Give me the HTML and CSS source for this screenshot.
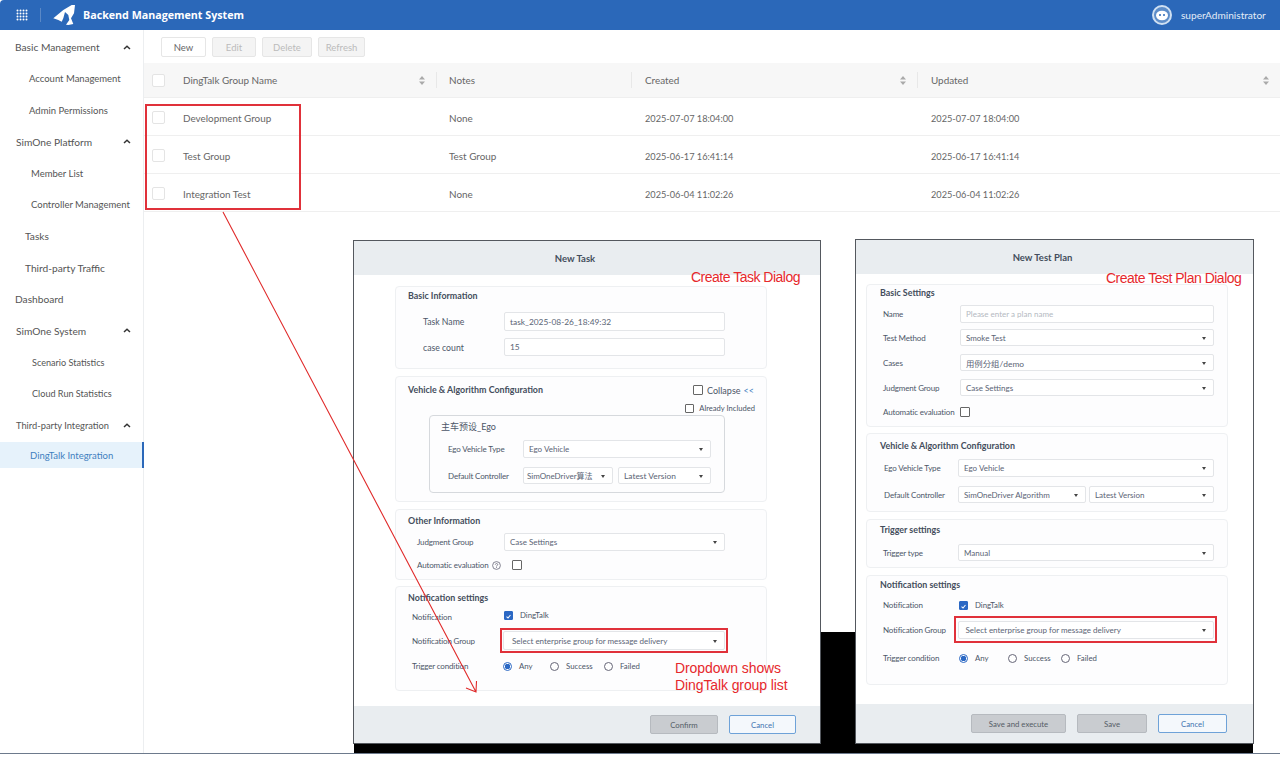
FILE: index.html
```html
<!DOCTYPE html>
<html lang="en">
<head>
<meta charset="utf-8">
<title>Backend Management System</title>
<link rel="stylesheet" href="styles.css">
</head>
<body>
<div class="app">
  <header class="topbar">
    <svg class="apps" width="12" height="12" viewBox="0 0 12 12" fill="#fff"><circle cx="1.5" cy="1.5" r="1"/><circle cx="4.5" cy="1.5" r="1"/><circle cx="7.5" cy="1.5" r="1"/><circle cx="10.5" cy="1.5" r="1"/><circle cx="1.5" cy="4.5" r="1"/><circle cx="4.5" cy="4.5" r="1"/><circle cx="7.5" cy="4.5" r="1"/><circle cx="10.5" cy="4.5" r="1"/><circle cx="1.5" cy="7.5" r="1"/><circle cx="4.5" cy="7.5" r="1"/><circle cx="7.5" cy="7.5" r="1"/><circle cx="10.5" cy="7.5" r="1"/><circle cx="1.5" cy="10.5" r="1"/><circle cx="4.5" cy="10.5" r="1"/><circle cx="7.5" cy="10.5" r="1"/><circle cx="10.5" cy="10.5" r="1"/></svg>
    <span class="topbar-sep"></span>
    <svg class="logo" width="22" height="20" viewBox="0 0 22 20" fill="#fff"><path d="M.3 13.300 10.300 5 18.700 0H22L21 8.300 18 13.300 20.300 19 15.300 20 13 19.700 16.300 15 15.300 10 12 7 10.300 13.300 8.700 16.700 5.300 15Z"/></svg>
    <span class="brand">Backend Management System</span>
    <span class="spacer"></span>
    <svg class="avatar" width="20" height="20" viewBox="0 0 20 20"><circle cx="10" cy="10" r="9" fill="#5d8dc9" stroke="#cfe0f2" stroke-width="2"/><ellipse cx="10" cy="10.500" rx="6" ry="4.800" fill="#fff"/><circle cx="8" cy="10" r="1" fill="#2b68b9"/><circle cx="12" cy="10" r="1" fill="#2b68b9"/></svg>
    <span class="username">superAdministrator</span>
  </header>
  <div class="workspace">
    <nav class="sidebar">
      <div class="nav-item i15">Basic Management<svg class="chev" width="8" height="5" viewBox="0 0 8 5"><path d="M1 4 4 1.200 7 4" fill="none" stroke="#333" stroke-width="1.500"/></svg></div>
      <div class="nav-item i29">Account Management</div>
      <div class="nav-item i29">Admin Permissions</div>
      <div class="nav-item i16">SimOne Platform<svg class="chev" width="8" height="5" viewBox="0 0 8 5"><path d="M1 4 4 1.200 7 4" fill="none" stroke="#333" stroke-width="1.500"/></svg></div>
      <div class="nav-item i31">Member List</div>
      <div class="nav-item i31">Controller Management</div>
      <div class="nav-item i25">Tasks</div>
      <div class="nav-item i25">Third-party Traffic</div>
      <div class="nav-item i15">Dashboard</div>
      <div class="nav-item i16">SimOne System<svg class="chev" width="8" height="5" viewBox="0 0 8 5"><path d="M1 4 4 1.200 7 4" fill="none" stroke="#333" stroke-width="1.500"/></svg></div>
      <div class="nav-item i32">Scenario Statistics</div>
      <div class="nav-item i32">Cloud Run Statistics</div>
      <div class="nav-item i16 slim">Third-party Integration<svg class="chev" width="8" height="5" viewBox="0 0 8 5"><path d="M1 4 4 1.200 7 4" fill="none" stroke="#333" stroke-width="1.500"/></svg></div>
      <div class="nav-item i30 active">DingTalk Integration</div>
    </nav>
    <main class="main">
      <div class="toolbar">
        <button class="tool w45">New</button>
        <button class="tool off w44">Edit</button>
        <button class="tool off w50">Delete</button>
        <button class="tool off w47">Refresh</button>
      </div>
      <div class="table">
        <div class="tr th">
          <div class="td"><span class="tick"></span><span class="name">DingTalk Group Name</span><svg class="sort" width="6" height="9" viewBox="0 0 6 9" fill="#aaa"><path d="M3 0 6 3.400H0ZM3 9 0 5.600H6Z"/></svg></div>
          <div class="td sep">Notes</div>
          <div class="td sep">Created<svg class="sort" width="6" height="9" viewBox="0 0 6 9" fill="#aaa"><path d="M3 0 6 3.400H0ZM3 9 0 5.600H6Z"/></svg></div>
          <div class="td sep">Updated<svg class="sort" width="6" height="9" viewBox="0 0 6 9" fill="#aaa"><path d="M3 0 6 3.400H0ZM3 9 0 5.600H6Z"/></svg></div>
        </div>
        <div class="tr">
          <div class="td"><span class="tick"></span><span class="name">Development Group</span></div>
          <div class="td">None</div><div class="td date">2025-07-07 18:04:00</div><div class="td date">2025-07-07 18:04:00</div>
        </div>
        <div class="tr">
          <div class="td"><span class="tick"></span><span class="name">Test Group</span></div>
          <div class="td">Test Group</div><div class="td date">2025-06-17 16:41:14</div><div class="td date">2025-06-17 16:41:14</div>
        </div>
        <div class="tr">
          <div class="td"><span class="tick"></span><span class="name">Integration Test</span></div>
          <div class="td">None</div><div class="td date">2025-06-04 11:02:26</div><div class="td date">2025-06-04 11:02:26</div>
        </div>
      </div>
    </main>
  </div>

  <div class="backdrop"></div>

  <section class="dialog task">
    <div class="d-head">New Task</div>
    <div class="d-body">
      <div class="panel p1">
        <div class="p-title">Basic Information</div>
        <div class="row r1"><label class="lab large w96 in15">Task Name</label><div class="field wide w221 h19">task_2025-08-26_18:49:32</div></div>
        <div class="row r2"><label class="lab large w96 in15">case count</label><div class="field wide w221 h18">15</div></div>
      </div>
      <div class="panel p2">
        <div class="p-head"><div class="p-title">Vehicle &amp; Algorithm Configuration</div><div class="collapse"><span class="box big"></span>Collapse <b class="arrows">&lt;&lt;</b></div></div>
        <div class="included"><span class="box"></span>Already Included</div>
        <div class="inner">
          <div class="inner-title">主车预设_Ego</div>
          <div class="row r3"><label class="lab w75">Ego Vehicle Type</label><div class="field sel w188 h18">Ego Vehicle<i class="caret"></i></div></div>
          <div class="row r4"><label class="lab w75">Default Controller</label><div class="field sel w90 h17 tight">SimOneDriver算法<i class="caret"></i></div><div class="field sel wide w93f h17 ml5">Latest Version<i class="caret"></i></div></div>
        </div>
      </div>
      <div class="panel p3">
        <div class="p-title">Other Information</div>
        <div class="row r5"><label class="lab w96 in9">Judgment Group</label><div class="field sel w221 h18">Case Settings<i class="caret"></i></div></div>
        <div class="row r6"><label class="lab w96 in9">Automatic evaluation<svg class="help" width="9" height="9" viewBox="0 0 9 9"><circle cx="4.500" cy="4.500" r="3.900" fill="none" stroke="#667" stroke-width=".8"/><path d="M3.300 3.600C3.400 2 5.800 2.200 5.700 3.600 5.600 4.500 4.500 4.400 4.500 5.500M4.500 6.200v.8" fill="none" stroke="#667" stroke-width=".8"/></svg></label><span class="box big ml8"></span></div>
      </div>
      <div class="panel p4">
        <div class="p-title">Notification settings</div>
        <div class="row r7"><label class="lab w96 in5">Notification</label><span class="box on raised"><svg width="9" height="9" viewBox="0 0 9 9"><path d="M2 4.600 3.900 6.500 7 2.600" fill="none" stroke="#fff" stroke-width="1.300"/></svg></span><span class="opt raised">DingTalk</span></div>
        <div class="row r8"><label class="lab w93 in5">Notification Group</label><div class="hilite h1"><div class="field sel w222 h19 ind9">Select enterprise group for message delivery<i class="caret"></i></div></div></div>
        <div class="row r9"><label class="lab w95 in5">Trigger condition</label><span class="radio on"></span><span class="opt o31">Any</span><span class="radio"></span><span class="opt o38">Success</span><span class="radio"></span><span class="opt">Failed</span></div>
      </div>
    </div>
    <div class="d-foot f1"><button class="btn grey w68">Confirm</button><button class="btn line w67">Cancel</button></div>
  </section>

  <section class="dialog plan">
    <div class="d-head">New Test Plan</div>
    <div class="d-body">
      <div class="panel q1">
        <div class="p-title">Basic Settings</div>
        <div class="row s1"><label class="lab w80 in3">Name</label><div class="field w254 h18 ph">Please enter a plan name</div></div>
        <div class="row s2"><label class="lab w80 in3">Test Method</label><div class="field sel w254 h17">Smoke Test<i class="caret"></i></div></div>
        <div class="row s3"><label class="lab w80 in3">Cases</label><div class="field sel wide w254 h17">用例分组/demo<i class="caret"></i></div></div>
        <div class="row s3"><label class="lab w80 in3">Judgment Group</label><div class="field sel w254 h17">Case Settings<i class="caret"></i></div></div>
        <div class="row s4"><label class="lab w80 in3">Automatic evaluation</label><span class="box big"></span></div>
      </div>
      <div class="panel q2">
        <div class="p-title">Vehicle &amp; Algorithm Configuration</div>
        <div class="row s5"><label class="lab w78 in4">Ego Vehicle Type</label><div class="field sel w256 h18">Ego Vehicle<i class="caret"></i></div></div>
        <div class="row s6"><label class="lab w78 in4">Default Controller</label><div class="field sel w128 h17">SimOneDriver Algorithm<i class="caret"></i></div><div class="field sel w125 h17 ml3">Latest Version<i class="caret"></i></div></div>
      </div>
      <div class="panel q3">
        <div class="p-title">Trigger settings</div>
        <div class="row s7"><label class="lab w78 in3">Trigger type</label><div class="field sel w256 h17">Manual<i class="caret"></i></div></div>
      </div>
      <div class="panel q4">
        <div class="p-title">Notification settings</div>
        <div class="row s8"><label class="lab w79 in3">Notification</label><span class="box on"><svg width="9" height="9" viewBox="0 0 9 9"><path d="M2 4.600 3.900 6.500 7 2.600" fill="none" stroke="#fff" stroke-width="1.300"/></svg></span><span class="opt">DingTalk</span></div>
        <div class="row s9"><label class="lab w74 in3">Notification Group</label><div class="hilite h2"><div class="field sel w256 h18 ind8">Select enterprise group for message delivery<i class="caret"></i></div></div></div>
        <div class="row s10"><label class="lab w79 in3">Trigger condition</label><span class="radio on"></span><span class="opt o33">Any</span><span class="radio"></span><span class="opt o37">Success</span><span class="radio"></span><span class="opt">Failed</span></div>
      </div>
    </div>
    <div class="d-foot f2"><button class="btn grey w95">Save and execute</button><button class="btn grey w70">Save</button><button class="btn line w69">Cancel</button></div>
  </section>

  <div class="note n1">Create Task Dialog</div>
  <div class="note n2">Create Test Plan Dialog</div>
  <div class="note n3">Dropdown shows<br>DingTalk group list</div>
  <div class="mark"></div>
  <svg class="arrow" width="1280" height="772" viewBox="0 0 1280 772"><path d="M223 212 476 692M466 688 476 692 476.500 681" fill="none" stroke="#e02b2b" stroke-width="1.100"/></svg>
</div>
</body>
</html>
```
FILE: styles.css
```css
* { box-sizing: border-box; }
html, body { margin: 0; height: 100%; background: #fff; overflow: hidden; }
body { font-family: Lato, "Noto Sans CJK SC", sans-serif; font-size: 10px; color: #555; }
.app { position: relative; width: 1280px; height: 772px; }

/* top bar */
.topbar { height: 30px; background: #2b68b9; display: flex; align-items: center; color: #fff; border-top-left-radius: 4px; }
.apps { margin-left: 16px; }
.topbar-sep { width: 1px; height: 14px; background: #5a88c6; margin-left: 12px; }
.logo { margin-left: 12px; }
.brand { margin-left: 8px; font-family: "Open Sans", sans-serif; font-weight: 700; font-size: 10.7px; }
.spacer { flex: 1; }
.avatar { margin-right: 9px; }
.username { width: 99px; font-size: 10.1px; color: #e3ecf7; }

/* workspace */
.workspace { display: flex; height: 724px; border-bottom: 1px solid #6d7a8c; }
.sidebar { width: 144px; padding-top: 1.5px; border-right: 1px solid #eceef0; }
.nav-item { position: relative; height: 31.5px; display: flex; align-items: center; white-space: nowrap; font-size: 9.5px; color: #555; }
.i15 { padding-left: 15px; font-size: 10.2px; }
.i16 { padding-left: 16px; font-size: 10.2px; }
.i16.slim { font-size: 9.3px; }
.i25 { padding-left: 25px; font-size: 10.2px; }
.i29 { padding-left: 29px; }
.i30 { padding-left: 30px; }
.i31 { padding-left: 31px; }
.i32 { padding-left: 32px; font-size: 9.1px; }
.chev { position: absolute; left: 123px; top: 13px; }
.active { background: #e6f2fb; color: #3f7fc0; border-right: 2px solid #2b68b9; height: 26px; margin-top: 1px; width: 144px; }

.main { flex: 1; min-width: 0; }
.toolbar { height: 33px; padding: 7px 0 0 17px; display: flex; gap: 6px; }
.tool { height: 20px; border: 1px solid #e6e6e6; background: #fff; border-radius: 2px; font: inherit; font-size: 9.5px; color: #666; padding: 0; }
.tool.off { background: #f4f4f4; color: #bbb; }
.w45 { width: 45px; } .w44 { width: 44px; } .w50 { width: 50px; } .w47 { width: 47px; }
.tr { display: grid; grid-template-columns: 292px 195px 286px 363px; height: 38px; padding-top: 2px; border-bottom: 1px solid #efefef; }
.tr.th { height: 35px; padding-top: 0; background: #f7f7f7; }
.td { display: flex; align-items: center; padding-left: 13px; position: relative; font-size: 9.9px; color: #666; }
.td:nth-child(n+3) { padding-left: 14px; }
.td.date { font-size: 9.2px; padding-top: 1px; }
.tick { width: 13px; height: 13px; border: 1px solid #e4e4e4; background: #fff; border-radius: 2px; margin: -1px 0 0 -5px; }
.th .tick { margin-top: 0; }
.name { margin-left: 18px; }
.sep::before { content: ""; position: absolute; left: 0; top: 9px; bottom: 9px; width: 1px; background: #e8e8e8; }
.sort { position: absolute; right: 11px; top: 13px; }

/* dialogs */
.backdrop { position: absolute; left: 354px; top: 632px; width: 899px; height: 121px; background: #000; }
.dialog { position: absolute; background: #fff; border: 1px solid #54585e; display: flex; flex-direction: column; color: #4c5668; }
.task { left: 353px; top: 240px; width: 468px; height: 504px; }
.plan { left: 855px; top: 239px; width: 399px; height: 505px; }
.d-head { height: 34px; padding-right: 24px; background: #e9edf0; display: flex; align-items: center; justify-content: center; font-weight: 700; font-size: 9.5px; color: #444d5c; }
.d-body { flex: 1; }
.task .d-body { padding: 11px 0 0 41px; }
.plan .d-body { padding: 10px 0 0 10px; }
.panel { border: 1px solid #eef0f2; border-radius: 4px; background: #fdfdfe; padding-left: 12px; font-size: 9px; }
.task .panel { width: 372px; }
.plan .panel { width: 362px; padding-left: 13px; }
.p1 { height: 83px; padding-top: 3px; }
.p2 { height: 126px; margin-top: 7px; padding-top: 7px; }
.p3 { height: 71px; margin-top: 7px; padding-top: 5px; }
.p4 { height: 105px; margin-top: 6px; padding-top: 5px; }
.q1 { height: 143px; padding-top: 2px; }
.q2 { height: 79px; margin-top: 6px; padding-top: 6px; }
.q3 { height: 49px; margin-top: 7px; padding-top: 4px; }
.q4 { height: 110px; margin-top: 7px; padding-top: 3px; }
.p-title { height: 12px; line-height: 12px; font-weight: 700; font-size: 8.9px; color: #444d5c; white-space: nowrap; }
.p-head { display: flex; justify-content: space-between; padding-right: 12px; }
.collapse, .included { display: flex; align-items: center; white-space: nowrap; }
.collapse .box { margin-right: 4px; }
.arrows { font-weight: 400; color: #3f7fc0; margin-left: 3px; }
.included { justify-content: flex-end; padding-right: 11px; margin-top: 6px; height: 12px; font-size: 7.6px; }
.included .box { margin-right: 5px; }
.inner { width: 296px; height: 78px; margin: 1px 0 0 21px; border: 1px solid #d6d9dd; border-radius: 4px; padding: 4px 0 0 11px; }
.inner-title { height: 14px; line-height: 14px; }

.row { display: flex; align-items: center; white-space: nowrap; }
.r1 { margin-top: 10px; } .r2 { margin-top: 7px; }
.r3 { margin-top: 6px; padding-left: 7px; } .r4 { margin-top: 9px; padding-left: 7px; }
.r5 { margin-top: 6px; } .r6 { margin-top: 6px; height: 16px; }
.r7 { margin-top: 5px; height: 16px; } .r8 { margin-top: 3px; } .r9 { margin-top: 5px; height: 16px; }
.s1 { margin-top: 6px; } .s2 { margin-top: 6px; } .s3 { margin-top: 8px; } .s4 { margin-top: 8px; height: 16px; }
.s5 { margin-top: 7px; } .s6 { margin-top: 9px; }
.s7 { margin-top: 8px; }
.s8 { margin-top: 7px; height: 14px; } .s9 { margin-top: 4px; } .s10 { margin-top: 8px; height: 14px; }
.lab { display: flex; align-items: center; flex: none; font-size: 8px; letter-spacing: -.15px; }
.lab.large { font-size: 8.7px; letter-spacing: 0; }
.in15 { padding-left: 15px; } .in9 { padding-left: 9px; } .in5 { padding-left: 4px; } .in3 { padding-left: 3px; } .in4 { padding-left: 4px; }
.w96 { width: 96px; } .w95 { width: 95px; } .w93 { width: 93px; } .w80 { width: 80px; } .w79 { width: 79px; } .w78 { width: 78px; } .w75 { width: 75px; } .w74 { width: 74px; }
.field { position: relative; display: flex; align-items: center; flex: none; padding-left: 5px; background: #fff; border: 1px solid #e3e5e8; border-radius: 2px; color: #5a6475; font-size: 8px; }
.field.wide { font-size: 8.4px; }
.w221 { width: 221px; } .w222 { width: 222px; } .w188 { width: 188px; } .w90 { width: 90px; } .w93f { width: 93px; } .w254 { width: 254px; } .w256 { width: 256px; } .w128 { width: 128px; } .w125 { width: 125px; }
.h17 { height: 17px; } .h18 { height: 18px; } .h19 { height: 19px; }
.ml3 { margin-left: 3px; } .ml5 { margin-left: 5px; } .ml8 { margin-left: 8px; }
.tight { padding-left: 3px; }
.ind9 { padding-left: 8px; } .ind8 { padding-left: 7px; }
.ph { color: #b4b9c1; }
.caret { position: absolute; right: 7px; top: 50%; margin-top: -1px; border: 2.5px solid transparent; border-top: 3px solid #444; border-bottom: 0; }
.box { display: inline-flex; flex: none; width: 9px; height: 9px; border: 1px solid #666; border-radius: 1px; background: #fff; }
.box.big { width: 10px; height: 10px; }
.box.on { background: #2b68c4; border-color: #2b68c4; }
.radio { flex: none; width: 9px; height: 9px; border: 1px solid #667; border-radius: 50%; background: #fff; }
.radio.on { border-color: #2b68c4; background: radial-gradient(circle, #2b68c4 0 2.6px, #fff 3px); }
.opt { flex: none; margin-left: 7px; font-size: 7.8px; }
.raised { margin-top: -4px; }
.o31 { width: 24px; margin-right: 7px; } .o33 { width: 26px; margin-right: 7px; } .o38 { width: 31px; margin-right: 7px; } .o37 { width: 30px; margin-right: 7px; }
.help { margin-left: 3px; }
.hilite { flex: none; border: 2px solid #e0313a; display: flex; align-items: center; justify-content: center; }
.h1 { width: 228px; height: 25px; margin-left: -1px; }
.h2 { width: 263px; height: 27px; }
.d-foot { display: flex; align-items: center; justify-content: flex-end; background: #e9edf0; }
.f1 { height: 37px; padding-right: 24px; gap: 11px; }
.f2 { height: 39px; padding-right: 26px; gap: 11px; }
.btn { height: 19px; padding: 0; font: inherit; font-size: 7.8px; border-radius: 2px; }
.grey { background: #c9ccd0; border: 1px solid #b6babf; color: #555c66; }
.line { background: #f4f8fc; border: 1px solid #6ea2d8; color: #3f74b0; }
.w68 { width: 68px; } .w67 { width: 67px; } .w95 { width: 95px; } .w70 { width: 70px; } .w69 { width: 69px; }

/* annotations */
.note { position: absolute; font-family: "Liberation Sans", sans-serif; font-size: 14px; line-height: 17px; color: #e6282c; white-space: nowrap; letter-spacing: -.5px; }
.n1 { left: 691px; top: 269px; }
.n2 { left: 1106px; top: 270px; }
.n3 { left: 675px; top: 660px; letter-spacing: -.1px; }
.mark { position: absolute; left: 145px; top: 104px; width: 156px; height: 106px; border: 2px solid #e0313a; }
.arrow { position: absolute; left: 0; top: 0; pointer-events: none; }
```
